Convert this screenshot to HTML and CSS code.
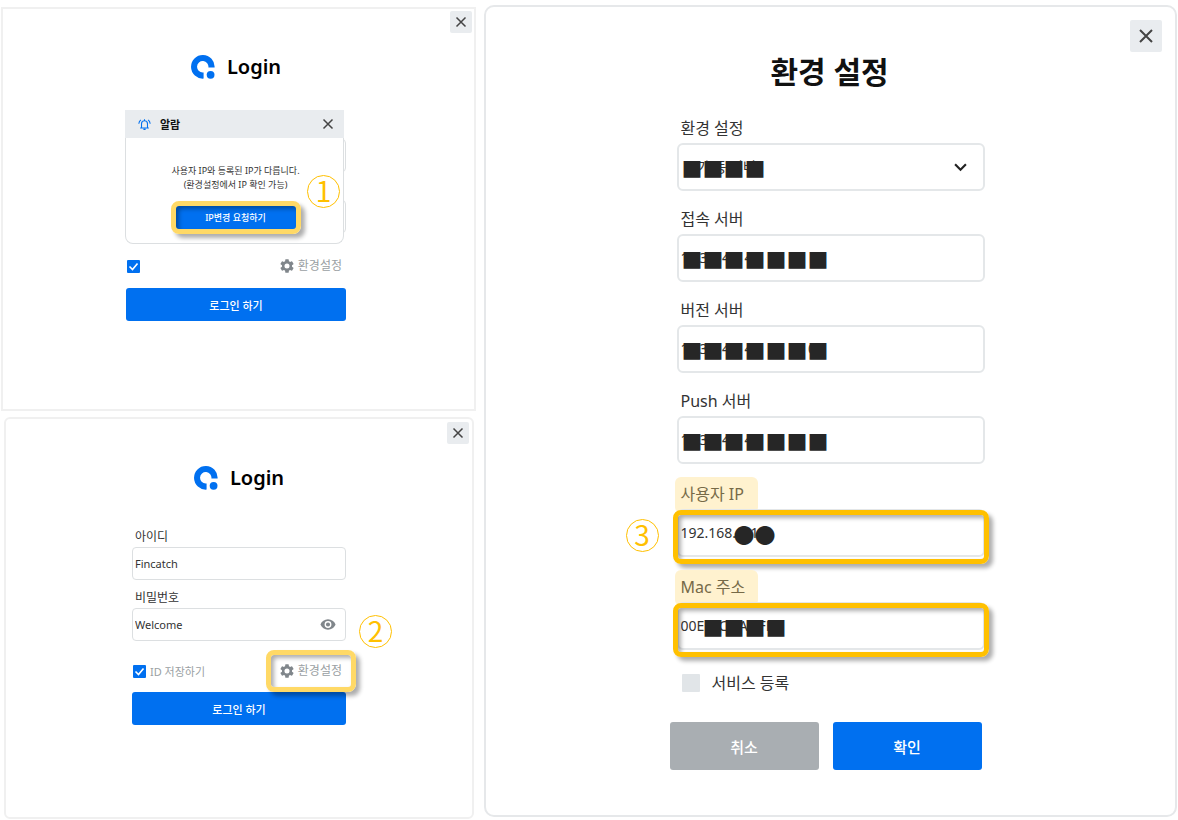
FILE: index.html
```html
<!DOCTYPE html>
<html lang="ko">
<head>
<meta charset="utf-8">
<meta name="viewport" content="width=device-width, initial-scale=1">
<title>Login</title>
<link rel="stylesheet" href="styles.css">
</head>
<body>
<svg class="sprite" aria-hidden="true">
  <symbol id="close" viewBox="0 0 12 12"><path d="M1.5 1.5l9 9M10.5 1.5l-9 9" fill="none" stroke="currentColor" stroke-width="1.5"/></symbol>
  <symbol id="logo" viewBox="0 0 24 24"><path d="M12.6 23.6A11.8 11.8 0 1 1 23.6 12.6H17.4A5.7 5.7 0 1 0 11.8 17.5H12.6z" fill="#0070f0"/><circle cx="19.6" cy="19.8" r="3.9" fill="#0070f0"/></symbol>
  <symbol id="gear" viewBox="2 2 20 20"><path fill="currentColor" d="M19.14 12.94c.04-.3.06-.61.06-.94s-.02-.64-.07-.94l2.03-1.58a.49.49 0 0 0 .12-.61l-1.92-3.32a.49.49 0 0 0-.59-.22l-2.39.96a7 7 0 0 0-1.62-.94l-.36-2.54a.48.48 0 0 0-.48-.41h-3.84a.48.48 0 0 0-.47.41l-.36 2.54c-.59.24-1.13.57-1.62.94l-2.39-.96a.48.48 0 0 0-.59.22L2.74 8.87a.48.48 0 0 0 .12.61l2.03 1.58c-.05.3-.09.63-.09.94s.02.64.07.94l-2.03 1.58a.49.49 0 0 0-.12.61l1.92 3.32c.12.22.37.29.59.22l2.39-.96c.5.38 1.03.7 1.62.94l.36 2.54c.05.24.24.41.48.41h3.84c.24 0 .44-.17.47-.41l.36-2.54a7 7 0 0 0 1.62-.94l2.39.96c.22.08.47 0 .59-.22l1.92-3.32a.48.48 0 0 0-.12-.61zM12 15.6a3.6 3.6 0 1 1 0-7.2 3.6 3.6 0 0 1 0 7.2z"/></symbol>
  <symbol id="bell" viewBox="0 0 24 24"><g fill="none" stroke="#0070f0" stroke-width="2"><path d="M4 18.5h16M6.5 18V10.500a5.500 5.500 0 0 1 11 0V18M12 2.500V5M10 21h4M1.500 10.500C1.800 7.500 3 5.300 5.300 3.500M22.500 10.500C22.200 7.500 21 5.300 18.700 3.500"/></g></symbol>
  <symbol id="eye" viewBox="1 4 22 16"><path fill="currentColor" d="M12 4.500C7 4.500 2.730 7.610 1 12c1.730 4.390 6 7.500 11 7.500s9.270-3.110 11-7.500c-1.730-4.390-6-7.500-11-7.500zM12 17a5 5 0 1 1 0-10 5 5 0 0 1 0 10zm0-8a3 3 0 1 0 0 6 3 3 0 0 0 0-6z"/></symbol>
  <symbol id="tick" viewBox="0 0 13 13"><path d="M2.500 6.500l3 3 5-6" fill="none" stroke="#fff" stroke-width="1.600"/></symbol>
</svg>
<main class="board">
  <div class="logins">
    <section class="panel panel-alert">
      <button class="close" type="button" aria-label="닫기"><svg><use href="#close"/></svg></button>
      <h1 class="brand"><svg><use href="#logo"/></svg>Login</h1>
      <form class="login login-covered">
        <div class="covered">
          <input class="input" type="text" aria-label="아이디">
          <input class="input" type="password" aria-label="비밀번호">
          <div class="alert" role="dialog" aria-labelledby="alert-title">
            <div class="alert-head">
              <svg class="bell"><use href="#bell"/></svg>
              <h2 id="alert-title">알람</h2>
              <button class="alert-close" type="button" aria-label="닫기"><svg><use href="#close"/></svg></button>
            </div>
            <div class="alert-body">
              <p>사용자 IP와 등록된 IP가 다릅니다.<br>(환경설정에서 IP 확인 가능)</p>
              <div class="request"><button class="primary" type="button">IP변경 요청하기</button><span class="ring ring-soft"></span></div>
            </div>
            <span class="badge badge-1">1</span>
          </div>
        </div>
        <div class="options">
          <span class="tick-box"><input class="check" type="checkbox" checked aria-label="ID 저장하기"><svg><use href="#tick"/></svg></span>
          <button class="settings" type="button"><svg><use href="#gear"/></svg>환경설정</button>
        </div>
        <button class="primary submit" type="button">로그인 하기</button>
      </form>
    </section>

    <section class="panel panel-login">
      <button class="close" type="button" aria-label="닫기"><svg><use href="#close"/></svg></button>
      <h1 class="brand"><svg><use href="#logo"/></svg>Login</h1>
      <form class="login">
        <label class="caption" for="user-id">아이디</label>
        <input class="input" id="user-id" type="text" value="Fincatch">
        <label class="caption" for="password">비밀번호</label>
        <div class="secret">
          <input class="input" id="password" type="text" value="Welcome">
          <button class="reveal" type="button" aria-label="비밀번호 보기"><svg><use href="#eye"/></svg></button>
          <span class="badge badge-2">2</span>
        </div>
        <div class="options">
          <label class="remember"><span class="tick-box"><input class="check" type="checkbox" checked><svg><use href="#tick"/></svg></span>ID 저장하기</label>
          <div class="marked"><button class="settings" type="button"><svg><use href="#gear"/></svg>환경설정</button><span class="ring ring-soft"></span></div>
        </div>
        <button class="primary submit" type="button">로그인 하기</button>
      </form>
    </section>
  </div>

  <section class="panel panel-settings">
    <button class="close close-large" type="button" aria-label="닫기"><svg><use href="#close"/></svg></button>
    <h1 class="title">환경 설정</h1>
    <form class="config">
      <div class="fields">
        <div class="field">
          <label for="env">환경 설정</label>
          <div class="box"><select id="env"><option>ᆞ 가 동 서버</option></select><svg class="chevron" viewBox="0 0 12 8"><path d="M1 1l5 5 5-5" fill="none" stroke="#222" stroke-width="2"/></svg><span class="mask">■■■■</span></div>
        </div>
        <div class="field">
          <label for="access">접속 서버</label>
          <div class="box"><input id="access" type="text" value="1   3    4    4    1     :    0"><span class="mask">■■■■■■■</span></div>
        </div>
        <div class="field">
          <label for="version">버전 서버</label>
          <div class="box"><input id="version" type="text" value="1   3    4    4    1     :   01"><span class="mask">■■■■■■■</span></div>
        </div>
        <div class="field">
          <label for="push">Push 서버</label>
          <div class="box"><input id="push" type="text" value="1   3    4    4    1     :    0"><span class="mask">■■■■■■■</span></div>
        </div>
        <div class="field field-marked">
          <label for="ip">사용자 IP</label>
          <div class="box"><input id="ip" type="text" value="192.168.    1"><span class="mask mask-ip">●●</span><span class="ring"></span><span class="badge badge-3">3</span></div>
        </div>
        <div class="field field-marked">
          <label for="mac">Mac 주소</label>
          <div class="box"><input id="mac" type="text" value="00E    C   A   FF"><span class="mask mask-mac">■■■■</span><span class="ring"></span></div>
        </div>
        <label class="service"><input class="check check-large" type="checkbox">서비스 등록</label>
      </div>
      <div class="actions">
        <button class="cancel" type="button">취소</button>
        <button class="primary" type="button">확인</button>
      </div>
    </form>
  </section>
</main>
</body>
</html>
```
FILE: styles.css
```css
* { box-sizing: border-box; }
body {
  margin: 0;
  background: #fff;
  color: #333;
  font-family: "Noto Sans", "Noto Sans CJK KR", sans-serif;
  font-size: 12px;
}
h1, h2, p { margin: 0; }
button, input, select { font: inherit; color: inherit; }
button { border: 0; padding: 0; background: none; cursor: pointer; }
svg { display: block; flex: none; }
.sprite { position: absolute; width: 0; height: 0; }

.board {
  display: grid;
  grid-template-columns: 475fr 693fr;
  gap: 8px;
  align-items: start;
  padding: 5px 1px 0;
}
.logins { display: flex; flex-direction: column; gap: 6px; padding-top: 2px; }
.panel { display: flex; flex-direction: column; align-items: center; border: 2px solid #f0f0f0; background: #fff; }
.panel-alert { padding: 2px 7px 88px 2px; }
.panel-alert .close { margin-right: -5px; }
.panel-login { margin: 0 2px 0 3px; padding: 3px 3px 92px; border-radius: 6px; }
.panel-settings { padding: 13px 13px 45px 11px; border-color: #e6e8ea; border-radius: 10px; }

.close {
  display: grid;
  place-items: center;
  align-self: flex-end;
  width: 22px;
  height: 22px;
  border-radius: 2px;
  background: #e9ecef;
  color: #444;
}
.close svg, .alert-close svg { width: 12px; height: 12px; }
.close-large { width: 32px; height: 32px; }
.close-large svg { width: 16px; height: 16px; }

.brand {
  display: flex;
  align-items: center;
  gap: 12px;
  margin-top: 20px;
  color: #000;
  font-size: 20px;
  font-weight: 600;
  line-height: 28px;
}
.brand svg { width: 24px; height: 24px; }

.login { display: flex; flex-direction: column; width: 214px; margin-top: 35px; }
.login-covered { width: 220px; margin-top: 29px; }
.caption { padding-left: 3px; line-height: 20px; }
.input {
  width: 100%;
  height: 33px;
  padding: 0 2px;
  border: 1px solid #dcdfe1;
  border-radius: 4px;
  background: #fff;
  font-size: 11px;
}
.input + .caption { margin-top: 8px; }
.secret { position: relative; }
.reveal { position: absolute; right: 10px; top: 11px; color: #80868b; }
.reveal svg { width: 16px; height: 11px; }

.options { display: flex; align-items: center; justify-content: space-between; height: 18px; margin: 21px 4px 12px 1px; color: #9a9fa3; }
.login-covered .options { margin: 13px 4px 13px 1px; }
.remember { display: flex; align-items: center; gap: 4px; font-size: 11px; }
.settings { display: flex; align-items: center; gap: 4px; line-height: 18px; }
.settings svg { width: 14px; height: 14px; color: #80868b; }
.check {
  display: block;
  appearance: none;
  width: 13px;
  height: 13px;
  margin: 0;
  border-radius: 1px;
  background: #e1e5e8;
}
.check:checked { background: #0070f0; }
.tick-box { display: grid; }
.tick-box > * { grid-area: 1 / 1; }
.tick-box svg { width: 13px; height: 13px; pointer-events: none; z-index: 1; }
.check-large { width: 18px; height: 18px; }
.primary, .cancel { border-radius: 3px; background: #0070f0; color: #fff; font-weight: 500; }
.cancel { background: #a9aeb2; }
.submit { height: 33px; font-size: 11px; }

.covered { position: relative; display: grid; gap: 28px; padding: 29px 0 11px; }
.alert { position: absolute; inset: 0 2px 0 -1px; display: flex; flex-direction: column; }
.alert-head { display: flex; align-items: center; height: 28px; padding: 0 10px 0 13px; background: #e9ecef; color: #111; }
.alert-head h2 { flex: 1; margin-left: 9px; font-size: 11px; font-weight: 700; }
.bell { width: 13px; height: 13px; }
.alert-close { color: #444; }
.alert-body {
  display: flex;
  flex: 1;
  flex-direction: column;
  align-items: center;
  border: 1px solid #dcdfe1;
  border-top: 0;
  border-radius: 0 0 8px 8px;
  background: #fff;
  padding: 26px 0 0 2px;
  font-size: 9px;
  line-height: 14px;
  text-align: center;
}
.request { position: relative; margin-top: 14px; }
.request .primary { width: 120px; height: 23px; border-radius: 1px; line-height: 20px; }

.ring {
  position: absolute;
  inset: 1px -4px -7px;
  border: 5px solid #ffc000;
  border-radius: 8px;
  box-shadow: 4px 4px 4px rgba(0, 0, 0, .32), inset 3px 3px 4px rgba(0, 0, 0, .32);
  pointer-events: none;
}
.ring-soft { inset: -5px; border-color: #ffd966; }
.marked { position: relative; }
.marked .ring { inset: -12px -14px; }
.badge {
  position: absolute;
  width: 33px;
  height: 33px;
  border: 1px solid #ffc000;
  border-radius: 50%;
  color: #ffc000;
  font-family: "Noto Sans CJK KR", sans-serif;
  font-size: 28px;
  line-height: 29px;
  text-align: center;
}
.badge-1 { right: 4px; top: 65px; }
.badge-2 { right: -46px; top: 7px; }
.badge-3 { left: -51px; top: 10px; }

.title { margin-top: -2px; color: #111; font-size: 30px; font-weight: 700; line-height: 44px; }
.config { width: 320px; margin-top: 22px; font-size: 16px; }
.fields { display: grid; gap: 16px; padding: 0 5px 0 7px; }
.field label { display: block; width: 81px; padding: 0 4px 2px; line-height: 25px; white-space: nowrap; }
.box { position: relative; height: 48px; }
.box input, .box select {
  appearance: none;
  width: 100%;
  height: 100%;
  padding: 0 2px 2px;
  border: 2px solid #e4e7e9;
  border-radius: 6px;
  background: #fff;
  font-size: 14px;
}
.chevron { position: absolute; right: 18px; top: 20px; width: 13px; height: 9px; }
.mask {
  position: absolute;
  left: 5px;
  top: 11px;
  color: #262626;
  font-family: "Noto Sans CJK KR", sans-serif;
  font-size: 21px;
  line-height: 28px;
  pointer-events: none;
}
.mask-ip { left: 57px; }
.mask-mac { left: 26px; }
.field-marked { margin-top: 2px; }
.field-marked label { position: relative; z-index: 0; color: #766a48; }
.field-marked label::before {
  content: "";
  position: absolute;
  z-index: -1;
  inset: -5px 0 -4px -2px;
  border-radius: 6px;
  background: #fff2cf;
}
.service { display: flex; align-items: center; gap: 12px; padding-left: 5px; line-height: 34px; }
.actions { display: grid; grid-template-columns: 1fr 1fr; gap: 14px; margin-top: 22px; padding-right: 8px; }
.actions button { height: 48px; font-size: 15px; }
```
